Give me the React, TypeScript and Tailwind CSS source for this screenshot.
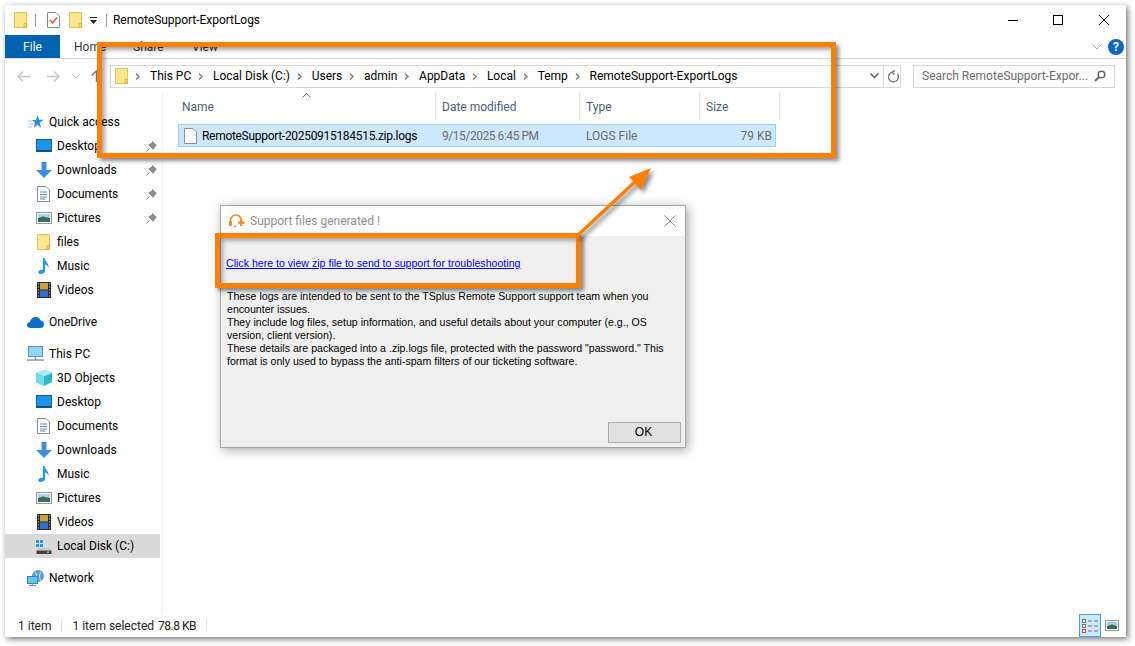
import type { ReactNode } from "react";

const uiFont = "font-['Roboto','Noto_Sans',sans-serif]";

function Svg({ w = 16, h = 16, children }: { w?: number; h?: number; children: ReactNode }) {
  return (
    <svg width={w} height={h} viewBox={`0 0 ${w} ${h}`} className="shrink-0 block">
      {children}
    </svg>
  );
}

function FolderIcon() {
  return (
    <Svg w={13} h={16}>
      <path d="M0.5 0.5H12.5V15.5H0.5Z" fill="#fde58f" stroke="#e9c34f" />
      <path d="M10 11.5H12.5V15.5H10Z" fill="#f6d365" stroke="#e0b540" />
    </Svg>
  );
}

function DesktopIcon() {
  return (
    <Svg>
      <rect x="0.5" y="1.5" width="15" height="12" fill="#1e95ea" stroke="#0b5fa8" />
      <rect x="1" y="12" width="14" height="1.5" fill="#0b4d8c" />
    </Svg>
  );
}

function DownloadIcon() {
  return (
    <Svg>
      <path d="M5.5 0H10.5V8H16L8 16L0 8H5.5Z" fill="#3d8fdd" />
    </Svg>
  );
}

function DocIcon() {
  return (
    <Svg w={13} h={16}>
      <path d="M0.5 0.5H9L12.5 4V15.5H0.5Z" fill="#fff" stroke="#8c8c8c" />
      <path d="M3 6H10M3 8.5H10M3 11H10M3 13H8" stroke="#5a8fc0" />
    </Svg>
  );
}

function PicturesIcon() {
  return (
    <Svg>
      <rect x="0.5" y="2.5" width="15" height="11" fill="#fff" stroke="#9a9a9a" />
      <rect x="2" y="4" width="12" height="4" fill="#a9d6ee" />
      <path d="M2 8L7 6.5L14 8V12H2Z" fill="#3d6e5c" />
    </Svg>
  );
}

function MusicIcon() {
  return (
    <Svg w={12} h={16}>
      <path d="M5 0H6.5C7 3 11 5 10.5 10C10 8 8.5 7 7 6.5V13C7 15 4.5 16 2.5 16C0.5 16 0 14.5 0.5 13.5C1 12 3.5 11.5 5 12Z" fill="#1e9be8" />
    </Svg>
  );
}

function VideosIcon() {
  return (
    <Svg w={14} h={16}>
      <rect x="0" y="0" width="14" height="16" fill="#2b2b2b" />
      <rect x="3" y="1" width="8" height="6.5" fill="#c9a13b" />
      <rect x="3" y="8.5" width="8" height="6.5" fill="#2f6fd0" />
      <path d="M1 2H2M1 5H2M1 8H2M1 11H2M1 14H2M12 2H13M12 5H13M12 8H13M12 11H13M12 14H13" stroke="#ddd" />
    </Svg>
  );
}

function CloudIcon() {
  return (
    <Svg w={17} h={12}>
      <path d="M3.5 12C1.5 12 0 10.7 0 9C0 7.4 1.2 6.3 2.8 6.2C3.5 3 6 1 8.7 1C11 1 12.8 2.3 13.6 4.4C15.6 4.6 17 6.2 17 8.2C17 10.4 15.4 12 13.4 12Z" fill="#0a6fc9" />
    </Svg>
  );
}

function PcIcon() {
  return (
    <Svg w={17} h={16}>
      <rect x="1.5" y="0.5" width="14" height="10" fill="#8fd3f7" stroke="#6b94b0" />
      <path d="M0 14H17" stroke="#8a9aa5" strokeWidth="1.5" />
      <path d="M8.5 11V14" stroke="#8a9aa5" strokeWidth="1.5" />
    </Svg>
  );
}

function CubeIcon() {
  return (
    <Svg>
      <path d="M8 0L16 3V12L8 16L0 12V3Z" fill="#2fb7c8" />
      <path d="M8 0L16 3L8 6.5L0 3Z" fill="#a6eef2" />
      <path d="M8 6.5V16L0 12V3Z" fill="#6fdde3" />
    </Svg>
  );
}

function DiskIcon() {
  return (
    <Svg w={16} h={16}>
      <rect x="0" y="2" width="3" height="3" fill="#1e9be8" />
      <rect x="4" y="2" width="3" height="3" fill="#1e9be8" />
      <rect x="0" y="6" width="3" height="3" fill="#1e9be8" />
      <rect x="4" y="6" width="3" height="3" fill="#1e9be8" />
      <path d="M2 10H14L15.5 12.5H0.5Z" fill="#c9c9c9" />
      <rect x="0.5" y="12.5" width="15" height="3.5" fill="#444" />
      <rect x="11" y="13.5" width="2" height="1.5" fill="#4ee05a" />
    </Svg>
  );
}

function NetworkIcon() {
  return (
    <Svg w={17} h={16}>
      <circle cx="11" cy="6" r="6" fill="#5c9fd3" />
      <path d="M8 2C10 4 10 8 8 11M14 2C12 4 12 8 14 11" stroke="#d5e8f5" fill="none" />
      <rect x="0.5" y="6.5" width="10" height="7" fill="#66c3f2" stroke="#3d86b8" />
      <path d="M2 15.5H9M5.5 13.5V15.5" stroke="#7d95a5" />
    </Svg>
  );
}

function StarIcon() {
  return (
    <Svg>
      <path d="M9.5 1L11 5.8H15.5L11.8 8.8L13.2 14L9.5 10.8L5.8 14L7 8.8L4 6H8Z" fill="#2f8fdc" />
      <path d="M0 7H4M1 10H5M0 13H4" stroke="#8ec6ef" />
    </Svg>
  );
}

function PinIcon() {
  return (
    <svg width="11" height="11" viewBox="0 0 11 11" className="block">
      <path d="M6.5 0L11 4.5L9.5 5.2L7.8 7.8L7.2 9L2 3.8L3.2 3.2L5.8 1.5Z" fill="#8c8c8c" />
      <path d="M3.5 7.5L0.5 10.5" stroke="#8c8c8c" />
    </svg>
  );
}

function Crumb() {
  return (
    <svg width="5" height="7" viewBox="0 0 5 7" className="shrink-0 block">
      <path d="M1 0.5L4 3.5L1 6.5" fill="none" stroke="#7d7d7d" strokeWidth="1.4" />
    </svg>
  );
}

type SideItem = {
  label: string;
  icon: ReactNode;
  top?: boolean;
  pin?: boolean;
  gap?: boolean;
  selected?: boolean;
};

const sideItems: SideItem[] = [
  { label: "Quick access", icon: <StarIcon />, top: true },
  { label: "Desktop", icon: <DesktopIcon />, pin: true },
  { label: "Downloads", icon: <DownloadIcon />, pin: true },
  { label: "Documents", icon: <DocIcon />, pin: true },
  { label: "Pictures", icon: <PicturesIcon />, pin: true },
  { label: "files", icon: <FolderIcon /> },
  { label: "Music", icon: <MusicIcon /> },
  { label: "Videos", icon: <VideosIcon /> },
  { label: "OneDrive", icon: <CloudIcon />, top: true, gap: true },
  { label: "This PC", icon: <PcIcon />, top: true, gap: true },
  { label: "3D Objects", icon: <CubeIcon /> },
  { label: "Desktop", icon: <DesktopIcon /> },
  { label: "Documents", icon: <DocIcon /> },
  { label: "Downloads", icon: <DownloadIcon /> },
  { label: "Music", icon: <MusicIcon /> },
  { label: "Pictures", icon: <PicturesIcon /> },
  { label: "Videos", icon: <VideosIcon /> },
  { label: "Local Disk (C:)", icon: <DiskIcon />, selected: true },
  { label: "Network", icon: <NetworkIcon />, top: true, gap: true },
];

function SideRow({ item }: { item: SideItem }) {
  return (
    <div
      className={`relative flex items-center h-6 w-[155px] ${item.gap ? "mt-2" : ""} ${
        item.selected ? "bg-[#d9d9d9]" : ""
      }`}
    >
      <div className={`flex items-center justify-center w-[17px] ${item.top ? "ml-[22px]" : "ml-[30px]"}`}>
        {item.icon}
      </div>
      <span className="ml-[5px] text-black">{item.label}</span>
      {item.pin && (
        <span className="absolute left-[141px] top-[7px]">
          <PinIcon />
        </span>
      )}
    </div>
  );
}

const crumbs = ["This PC", "Local Disk (C:)", "Users", "admin", "AppData", "Local", "Temp", "RemoteSupport-ExportLogs"];

function FileExplorer() {
  return (
    <div className="flex flex-col w-[1121px] h-[632px] bg-white shadow-[2px_2px_6px_rgba(0,0,0,0.55)]">
      {/* title bar */}
      <div className="flex items-center h-[30px] pl-[9px]">
        <FolderIcon />
        <div className="w-px h-[13px] bg-[#9a9a9a] ml-[8px]" />
        <div className="ml-[11px]">
          <svg width="13" height="16" viewBox="0 0 13 16" className="block">
            <path d="M0.5 0.5H9L12.5 4V15.5H0.5Z" fill="#fff" stroke="#8c8c8c" />
            <path d="M3 8L5.5 11L10 5.5" fill="none" stroke="#e0532a" strokeWidth="1.3" />
          </svg>
        </div>
        <div className="ml-[9px]">
          <FolderIcon />
        </div>
        <svg width="8" height="8" viewBox="0 0 8 8" className="ml-[8px] mt-[2px] block">
          <path d="M0 0H7V1H0ZM0 3H7L3.5 7Z" fill="#222" />
        </svg>
        <div className="w-px h-[13px] bg-[#9a9a9a] ml-[8px]" />
        <span className="ml-[6px] text-black tracking-[-0.04px]">RemoteSupport-ExportLogs</span>
        <div className="ml-auto flex items-center">
          <div className="w-[10px] h-px bg-black mr-[35px]" />
          <div className="w-[10px] h-[10px] border border-black mr-[36px]" />
          <svg width="10" height="10" viewBox="0 0 10 10" className="block mr-[17px]">
            <path d="M0 0L10 10M10 0L0 10" stroke="#111" strokeWidth="1" />
          </svg>
        </div>
      </div>

      {/* ribbon tabs */}
      <div className="flex items-stretch h-6 border-b border-[#d9d9d9] pr-[2px]">
        <div className="flex items-center justify-center w-[55px] bg-[#0063b1] text-white">File</div>
        <div className="flex items-center ml-[14px] w-[59px] text-[#333]">Home</div>
        <div className="flex items-center w-[59px] text-[#333]">Share</div>
        <div className="flex items-center text-[#333]">View</div>
        <div className="ml-auto flex items-center gap-[6px]">
          <svg width="10" height="6" viewBox="0 0 10 6" className="block">
            <path d="M0.5 0.5L5 5L9.5 0.5" fill="none" stroke="#aaa" />
          </svg>
          <div className="flex items-center justify-center w-4 h-4 rounded-full bg-[#0a66c2] text-white text-[12px] font-bold">
            ?
          </div>
        </div>
      </div>

      {/* address row */}
      <div className="flex items-center h-[34px]">
        <div className="flex items-center w-[105px] pl-[12px] text-[#c4c4c4]">
          <svg width="13" height="11" viewBox="0 0 13 11" className="block">
            <path d="M6 0.5L1 5.5L6 10.5M1 5.5H13" fill="none" stroke="#c8c8c8" strokeWidth="1.4" />
          </svg>
          <svg width="13" height="11" viewBox="0 0 13 11" className="ml-[17px] block">
            <path d="M7 0.5L12 5.5L7 10.5M12 5.5H0" fill="none" stroke="#c8c8c8" strokeWidth="1.4" />
          </svg>
          <svg width="8" height="5" viewBox="0 0 8 5" className="ml-[12px] block">
            <path d="M0.5 0.5L4 4L7.5 0.5" fill="none" stroke="#c8c8c8" />
          </svg>
          <svg width="11" height="12" viewBox="0 0 11 12" className="ml-[11px] block shrink-0">
            <path d="M0.8 5.5L5.5 0.8L10.2 5.5M5.5 1V12" fill="none" stroke="#777" strokeWidth="1.4" />
          </svg>
        </div>
        <div className="flex items-center w-[791px] h-[23px] border border-[#d9d9d9]">
          <div className="ml-[4px]">
            <FolderIcon />
          </div>
          <div className="flex items-center w-[752px] pl-[7px] text-black">
            {crumbs.map((c) => (
              <div key={c} className="flex items-center">
                <Crumb />
                <span className="ml-[10px] mr-[6.7px]">{c}</span>
              </div>
            ))}
          </div>
          <svg width="9" height="6" viewBox="0 0 9 6" className="block -ml-[2px]">
            <path d="M0.5 0.5L4.5 4.5L8.5 0.5" fill="none" stroke="#555" strokeWidth="1.4" />
          </svg>
          <div className="w-px h-full bg-[#d9d9d9] ml-[4px]" />
          <svg width="12" height="13" viewBox="0 0 12 13" className="block ml-[4px]">
            <path d="M9.5 4A5 5 0 1 1 4 2.2M4 2.2L7 0.5M4 2.2L6.5 4.5" fill="none" stroke="#777" strokeWidth="1.4" />
          </svg>
        </div>
        <div className="flex items-center justify-between w-[202px] h-[23px] ml-[12px] border border-[#d9d9d9] pl-[8px] pr-[8px] text-[#6d6d6d]">
          <span className="whitespace-nowrap">Search RemoteSupport-Expor...</span>
          <svg width="12" height="12" viewBox="0 0 12 12" className="block">
            <circle cx="7.5" cy="4.5" r="3.3" fill="none" stroke="#666" strokeWidth="1.5" />
            <path d="M5 7L1 11" stroke="#666" strokeWidth="2" />
          </svg>
        </div>
      </div>

      {/* body */}
      <div className="flex flex-1 min-h-0">
        <nav className="w-[158px] pt-[17px] border-r border-[#f0f0f0]">
          {sideItems.map((item, i) => (
            <SideRow key={i} item={item} />
          ))}
        </nav>
        <div className="flex-1 pl-[15px]">
          <div className="relative flex h-[27px] text-[#4c607a]">
            <svg width="9" height="5" viewBox="0 0 9 5" className="absolute left-[124px] top-0 block">
              <path d="M0.5 4.5L4.5 0.5L8.5 4.5" fill="none" stroke="#777" />
            </svg>
            <div className="flex items-center w-[258px] pl-[4px] border-r border-[#e5e5e5]">Name</div>
            <div className="flex items-center w-[144px] pl-[6px] border-r border-[#e5e5e5]">Date modified</div>
            <div className="flex items-center w-[120px] pl-[6px] border-r border-[#e5e5e5]">Type</div>
            <div className="flex items-center w-[80px] pl-[6px] border-r border-[#e5e5e5]">Size</div>
          </div>
          <div className="flex items-center w-[598px] h-[23px] mt-[4px] bg-[#cce8ff] border border-[#99d1ff] text-[#6d6d6d]">
            <div className="w-[263px] flex items-center pl-[5px]">
              <svg width="13" height="16" viewBox="0 0 13 16" className="block shrink-0">
                <path d="M0.5 0.5H9L12.5 4V15.5H0.5Z" fill="#fff" stroke="#8c8c8c" />
              </svg>
              <span className="ml-[5px] text-black whitespace-nowrap tracking-[-0.3px]">
                RemoteSupport-20250915184515.zip.logs
              </span>
            </div>
            <div className="w-[144px] tracking-[-0.45px]">9/15/2025 6:45 PM</div>
            <div className="w-[120px]">LOGS File</div>
            <div className="flex-1 text-right pr-[3px]">79 KB</div>
          </div>
        </div>
      </div>

      {/* status bar */}
      <div className="flex items-center h-[23px] text-[#222]">
        <span className="ml-[13px]">1 item</span>
        <div className="w-px h-[13px] bg-[#e5e5e5] ml-[10px]" />
        <span className="ml-[10px]">1 item selected</span>
        <span className="ml-[4px] tracking-[-0.5px]">78.8 KB</span>
        <div className="w-px h-[13px] bg-[#e5e5e5] ml-[10px]" />
        <div className="ml-auto flex items-center pr-[7px]">
          <div className="flex items-center justify-center w-[22px] h-[23px] bg-[#cce8ff] border border-[#3ea7e0]">
            <svg width="16" height="14" viewBox="0 0 16 14" className="block">
              <rect x="0.5" y="0.5" width="3" height="3" fill="#fff" stroke="#777" />
              <rect x="0.5" y="5.5" width="3" height="3" fill="#fff" stroke="#777" />
              <rect x="0.5" y="10.5" width="3" height="3" fill="#fff" stroke="#c44" />
              <path d="M6 2H10M12 2H16M6 7H10M12 7H16M6 12H10M12 12H16" stroke="#777" />
            </svg>
          </div>
          <div className="ml-[4px]">
            <svg width="14" height="11" viewBox="0 0 14 11" className="block">
              <rect x="0.5" y="0.5" width="13" height="10" fill="#fff" stroke="#9a9a9a" />
              <rect x="2" y="2" width="10" height="3.5" fill="#8fd3f7" />
              <path d="M2 6L7 4.5L12 6V9H2Z" fill="#3d6e5c" />
            </svg>
          </div>
        </div>
      </div>
    </div>
  );
}

function SupportDialog() {
  return (
    <div className="absolute left-[220px] top-[205px] flex flex-col w-[466px] h-[243px] border border-[#a6a6a6] bg-[#f0f0f0] shadow-[2px_2px_10px_rgba(0,0,0,0.35)] font-['Liberation_Sans',Arial,sans-serif] text-[10.6px] leading-[13px] text-black">
      <div className={`flex items-center h-[30px] bg-white pl-[8px] pr-[9px] ${uiFont} text-[12px]`}>
        <svg width="16" height="14" viewBox="0 0 16 14" className="block">
          <path d="M1.5 8V6.5A5.5 5.5 0 0 1 12.5 6.5" fill="none" stroke="#f28a1e" strokeWidth="1.6" />
          <rect x="0" y="7" width="3" height="5" rx="1" fill="#f28a1e" />
          <path d="M5 12.5H7" stroke="#f28a1e" strokeWidth="1.6" />
          <path d="M12 5.5V12M9 8.7H15.5" stroke="#f28a1e" strokeWidth="2.2" />
        </svg>
        <span className="ml-[5px] text-[#8f8f8f]">Support files generated !</span>
        <svg width="12" height="12" viewBox="0 0 12 12" className="ml-auto block">
          <path d="M0.5 0.5L11.5 11.5M11.5 0.5L0.5 11.5" stroke="#8a8a8a" />
        </svg>
      </div>
      <div className="flex flex-col flex-1 px-[5px]">
        <a className="mt-[21px] text-[#0000ff] underline whitespace-nowrap">Click here to view zip file to send to support for troubleshooting</a>
        <p className="mt-[20px] pl-px whitespace-nowrap">
          These logs are intended to be sent to the TSplus Remote Support support team when you
          <br />
          encounter issues.
          <br />
          They include log files, setup information, and useful details about your computer (e.g., OS
          <br />
          version, client version).
          <br />
          These details are packaged into a .zip.logs file, protected with the password "password." This
          <br />
          format is only used to bypass the anti-spam filters of our ticketing software.
        </p>
        <div className="mt-auto mb-[4px] -mr-px flex justify-end">
          <button className="w-[73px] h-[21px] bg-[#e1e1e1] border border-[#adadad] text-[12px] pr-[2px]">OK</button>
        </div>
      </div>
    </div>
  );
}

export default function App() {
  return (
    <div className={`relative w-[1135px] h-[646px] overflow-hidden bg-white pt-[5px] pl-[5px] text-[12px] leading-4 ${uiFont}`}>
      <FileExplorer />
      <SupportDialog />

      {/* orange callouts on top of the screenshot */}
      <div className="absolute left-[97px] top-[42px] w-[739px] h-[116px] border-[5px] border-[#ff8000] shadow-[3px_3px_4px_rgba(0,0,0,0.45),inset_3px_3px_4px_rgba(0,0,0,0.35)]" />
      <div className="absolute left-[215px] top-[233px] w-[366px] h-[55px] border-[5px] border-[#ff8000] shadow-[3px_3px_4px_rgba(0,0,0,0.45),inset_3px_3px_4px_rgba(0,0,0,0.3)]" />
      <svg
        width="90"
        height="80"
        viewBox="0 0 90 80"
        className="absolute left-[570px] top-[165px] block drop-shadow-[3px_3px_2px_rgba(0,0,0,0.45)]"
      >
        <path d="M6 72L68 14" stroke="#ff8000" strokeWidth="3.5" />
        <path d="M81 3L59 12L71 25Z" fill="#ff8000" />
      </svg>
    </div>
  );
}
